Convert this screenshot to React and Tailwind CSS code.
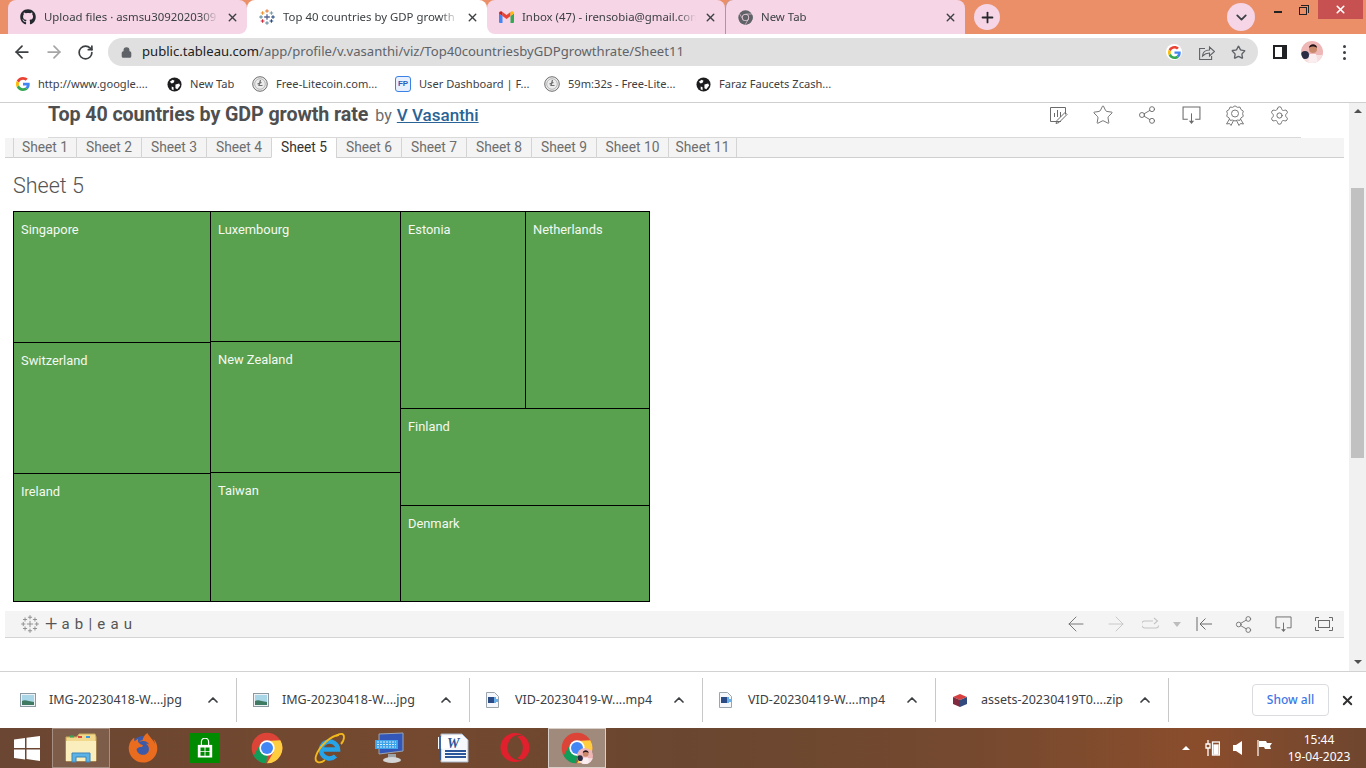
import {
  ArrowLeft,
  ArrowRight,
  RotateCw,
  Lock,
  Star,
  Share2,
  X,
  ChevronDown,
  ChevronUp,
  Plus,
  Settings,
} from "lucide-react";
import { FaGithub, FaFirefoxBrowser, FaOpera } from "react-icons/fa";

const ui = "font-['Noto_Sans',sans-serif]";
const viz = "font-['Roboto',sans-serif]";

const GoogleG = ({ size = 14 }) => (
  <svg width={size} height={size} viewBox="0 0 48 48" className="shrink-0">
    <path fill="#EA4335" d="M24 9.5c3.5 0 6.700 1.200 9.200 3.600l6.900-6.900C35.900 2.400 30.500 0 24 0 14.600 0 6.500 5.400 2.600 13.200l8 6.200C12.500 13.700 17.800 9.500 24 9.500z" />
    <path fill="#4285F4" d="M47 24.500c0-1.600-.1-3.100-.4-4.500H24v9h12.900c-.6 3-2.200 5.500-4.700 7.200l7.700 6C44.400 37.900 47 31.800 47 24.500z" />
    <path fill="#FBBC05" d="M10.600 28.600c-.5-1.400-.8-3-.8-4.600s.3-3.200.8-4.600l-8-6.200C.9 16.500 0 20.100 0 24s.9 7.500 2.600 10.800l8-6.200z" />
    <path fill="#34A853" d="M24 48c6.500 0 11.900-2.100 15.900-5.800l-7.700-6c-2.200 1.400-4.900 2.300-8.200 2.300-6.200 0-11.500-4.200-13.400-9.900l-8 6.200C6.500 42.600 14.600 48 24 48z" />
  </svg>
);

const ChromeIcon = ({ size = 32, gray = false }) => (
  <svg width={size} height={size} viewBox="0 0 48 48" className="shrink-0">
    <circle cx="24" cy="24" r="23" fill={gray ? "#5f6368" : "#DB4437"} />
    <path fill={gray ? "#5f6368" : "#0F9D58"} d="M24 47A23 23 0 0 1 4 35.500L14 18l10 18 -1 11z" />
    <path fill={gray ? "#5f6368" : "#FFCD40"} d="M44 12.500A23 23 0 0 1 24 47l10-17-10-16.500z" />
    {gray && <path d="M24 13h20M15 29L5 12M33 29L23 47" stroke="#f5d5e6" strokeWidth="2" />}
    <circle cx="24" cy="24" r="11.500" fill={gray ? "#f5d5e6" : "#fff"} />
    <circle cx="24" cy="24" r="9" fill={gray ? "#5f6368" : "#4285F4"} />
  </svg>
);

const TableauMark = ({ size = 16, mono = false }) => {
  const plus = (x, y, r, c, w = 1.3) => (
    <path
      key={`${x}-${y}`}
      d={`M${x - r} ${y}H${x + r}M${x} ${y - r}V${y + r}`}
      stroke={mono ? "#8a8a8a" : c}
      strokeWidth={w}
      fill="none"
    />
  );
  return (
    <svg width={size} height={size} viewBox="0 0 20 20" className="shrink-0">
      {plus(10, 10, 3.5, "#5b6591", mono ? 1 : 1.6)}
      {plus(10, 2.500, 2.300, "#e8762c", mono ? 1 : 1.3)}
      {plus(10, 17.500, 2.300, "#5b879b", mono ? 1 : 1.3)}
      {plus(2.500, 10, 2.300, "#59879b", mono ? 1 : 1.3)}
      {plus(17.500, 10, 2.300, "#1f457e", mono ? 1 : 1.3)}
      {plus(4.500, 5, 2.300, "#eb912b", mono ? 1 : 1.3)}
      {plus(15.500, 5, 2.300, "#7099a6", mono ? 1 : 1.3)}
      {plus(4.500, 15, 2.300, "#c72035", mono ? 1 : 1.3)}
      {plus(15.500, 15, 2.300, "#1f447e", mono ? 1 : 1.3)}
    </svg>
  );
};

const GmailIcon = () => (
  <svg width="15" height="12" viewBox="0 0 30 24" className="shrink-0">
    <path fill="#4285F4" d="M0 5v17a2 2 0 0 0 2 2h5V10z" />
    <path fill="#34A853" d="M30 5v17a2 2 0 0 1-2 2h-5V10z" />
    <path fill="#EA4335" d="M7 10V2l8 6 8-6v8l-8 6z" />
    <path fill="#C5221F" d="M0 5c0-4 4.500-6 7-3v8z" />
    <path fill="#FBBC04" d="M30 5c0-4-4.500-6-7-3v8z" />
  </svg>
);

const GlobeIcon = () => (
  <svg width="15" height="15" viewBox="0 0 16 16" className="shrink-0">
    <circle cx="8" cy="8" r="7.500" fill="#1d1d1f" />
    <path fill="#fff" d="M3 5l3-2 2 1-1 2-2 1zM9 8l4-1 1 2-3 4-2-1zM5 10l2 1v3l-2-1z" />
  </svg>
);

const LiteIcon = () => (
  <svg width="16" height="16" viewBox="0 0 16 16" className="shrink-0">
    <circle cx="8" cy="8" r="7.300" fill="#ececec" stroke="#6f6f6f" strokeWidth="1" />
    <circle cx="8" cy="8" r="5.300" fill="none" stroke="#a8a8a8" strokeWidth=".8" />
    <path d="M8.500 4L7 9.500h3.500M5.500 8l4-1.500" fill="none" stroke="#6f6f6f" strokeWidth="1.200" />
  </svg>
);

const FpIcon = () => (
  <span className="w-4 h-4 shrink-0 rounded-[3px] border border-[#3b82e6] bg-[#e8f0fe] text-[#2a5db8] text-[8px] font-bold leading-[14px] text-center font-['Liberation_Sans',sans-serif]">
    FP
  </span>
);

const Avatar = ({ size = 22 }) => (
  <svg width={size} height={size} viewBox="0 0 22 22" className="shrink-0">
    <clipPath id={`av${size}`}>
      <circle cx="11" cy="11" r="11" />
    </clipPath>
    <g clipPath={`url(#av${size})`}>
      <rect width="22" height="22" fill="#efb6b6" />
      <rect y="14" width="22" height="8" fill="#f5dfe0" />
      <circle cx="4" cy="14" r="4" fill="#2a2c44" />
      <circle cx="12" cy="8" r="4" fill="#c98a6c" />
      <path d="M8 7c0-5 8-5 8 0-2-2-6-2-8 0z" fill="#23151a" />
      <path d="M7 22l2-9h6l2 9z" fill="#fbeef0" />
    </g>
  </svg>
);

const tabs = [
  { title: "Upload files · asmsu30920203091", icon: <FaGithub size={16} color="#24292f" className="shrink-0" />, wrap: "w-[239px] bg-[linear-gradient(to_bottom,#ea8f68_50%,#fff_50%)]", shape: "bg-[#f5d5e6] rounded-t-lg rounded-br-lg" },
  { title: "Top 40 countries by GDP growth rate", icon: <TableauMark />, wrap: "w-[240px]", shape: "bg-white rounded-t-lg" },
  { title: "Inbox (47) - irensobia@gmail.com", icon: <GmailIcon />, wrap: "w-[238px] bg-[linear-gradient(to_bottom,#ea8f68_50%,#fff_50%)]", shape: "bg-[#f5d5e6] rounded-t-lg rounded-bl-lg" },
  { title: "New Tab", icon: <ChromeIcon size={15} gray />, wrap: "w-[240px]", shape: "bg-[#f5d5e6] rounded-t-lg border-l border-[#a89aa2]" },
];

const TabStrip = () => (
  <div className={`h-[34px] bg-[#ea8f68] flex pl-2 ${ui}`}>
    {tabs.map((t, i) => (
      <div key={i} className={`h-full ${t.wrap}`}>
        <div className={`h-full flex items-center pl-3 pr-2 gap-2 ${t.shape}`}>
          {t.icon}
          <span className="flex-1 overflow-hidden whitespace-nowrap text-[11.4px] text-[#3c4043] [mask-image:linear-gradient(to_right,black_90%,transparent)]">
            {t.title}
          </span>
          <X size={13} strokeWidth={2.600} className="shrink-0 text-[#3c4043]" />
        </div>
      </div>
    ))}
    <div className="ml-[9px] mt-1 w-[26px] h-[26px] rounded-full bg-[#f5d5e6] flex items-center justify-center">
      <Plus size={17} strokeWidth={2.500} className="text-[#27272a]" />
    </div>
    <div className="flex-1" />
    <div className="mt-[3px] w-7 h-7 rounded-full bg-[#f5d5e6] flex items-center justify-center">
      <ChevronDown size={17} strokeWidth={2.500} className="text-[#3c4043]" />
    </div>
    <div className="h-[19px] flex items-start ml-[19px]">
      <div className="w-[8px] h-[2px] mt-[11px] bg-[#222] mr-[17px]" />
      <div className="relative w-[8px] h-[8px] mt-[7px] border border-[#222] mr-[11px]">
        <div className="absolute -top-[3px] -right-[3px] w-[8px] h-[8px] border-t border-r border-[#222]" />
      </div>
      <div className="w-[45px] h-[19px] mr-[3px] bg-[#c75050] flex items-center justify-center">
        <X size={13} strokeWidth={3} className="text-white" />
      </div>
    </div>
  </div>
);

const ChromeShare = () => (
  <svg width="16" height="15" viewBox="0 0 16 15" fill="none" stroke="#5f6368" strokeWidth="1.100" className="ml-[17px] shrink-0">
    <path d="M6 3.500H.6v11h12V11" />
    <path d="M3.500 11c.3-4 3.500-6 7-6V2l5 4.500-5 4.500V8c-3 0-5 1-7 3z" />
  </svg>
);

const Toolbar = () => (
  <div className="h-[33px] pt-[3px] bg-white flex items-center pl-3">
    <ArrowLeft size={20} strokeWidth={2.100} className="text-[#3c4043]" />
    <ArrowRight size={20} strokeWidth={2.100} className="ml-3 text-[#a6a6a6]" />
    <RotateCw size={17} strokeWidth={2.400} className="ml-[13px] text-[#3c4043]" />
    <div className="ml-[14px] w-[1150px] h-7 rounded-full bg-[#e0e0e0] flex items-center pl-[13px] pr-3">
      <Lock size={11} strokeWidth={3} fill="#5f6368" className="text-[#5f6368]" />
      <span className={`ml-[10px] text-[13.1px] text-[#5f6368] ${ui}`}>
        <span className="text-[#202124]">public.tableau.com</span>/app/profile/v.vasanthi/viz/Top40countriesbyGDPgrowthrate/Sheet11
      </span>
      <div className="flex-1" />
      <div className="w-4 h-4 rounded-full bg-white flex items-center justify-center">
        <GoogleG size={13} />
      </div>
      <ChromeShare />
      <Star size={15} strokeWidth={2.200} className="ml-[16px] text-[#5f6368]" />
    </div>
    <div className="ml-[15px] w-[14px] h-[14px] border-2 border-[#202124] border-r-[5px]" />
    <div className="ml-[14px]">
      <Avatar />
    </div>
    <div className="ml-[20px] flex flex-col gap-[3px]">
      <div className="w-[3px] h-[3px] rounded-full bg-[#3c4043]" />
      <div className="w-[3px] h-[3px] rounded-full bg-[#3c4043]" />
      <div className="w-[3px] h-[3px] rounded-full bg-[#3c4043]" />
    </div>
  </div>
);

const bookmarks = [
  { label: "http://www.google....", icon: <GoogleG />, w: "w-[151px]" },
  { label: "New Tab", icon: <GlobeIcon />, w: "w-[85px]" },
  { label: "Free-Litecoin.com...", icon: <LiteIcon />, w: "w-[143px]" },
  { label: "User Dashboard | F...", icon: <FpIcon />, w: "w-[149px]" },
  { label: "59m:32s - Free-Lite...", icon: <LiteIcon />, w: "w-[152px]" },
  { label: "Faraz Faucets Zcash...", icon: <GlobeIcon />, w: "w-[150px]" },
];

const Bookmarks = () => (
  <div className={`h-[36px] bg-white border-b border-[#cfcfcf] flex items-center pl-4 ${ui}`}>
    {bookmarks.map((b) => (
      <div key={b.label + b.w} className={`flex items-center gap-2 ${b.w}`}>
        {b.icon}
        <span className="text-[11.1px] text-[#3c4043] whitespace-nowrap">{b.label}</span>
      </div>
    ))}
  </div>
);

const EditIcon = () => (
  <svg width="20" height="19" viewBox="0 0 20 19" fill="none" stroke="#6b6b6b" strokeWidth="1">
    <path d="M12 15.500H1.500V1.500h15v7" />
    <path d="M5.500 11V7M8.500 11V4M11.500 11V6" />
    <path d="M7 17.500l1-3 8-8 2 2-8 8z" />
  </svg>
);

const ScreenDownload = ({ size = 18 }) => (
  <svg width={size} height={size} viewBox="0 0 18 18" fill="none" stroke="#6b6b6b" strokeWidth="1">
    <path d="M5.500 12.500H1V1h16v11.500h-4.500" />
    <path d="M9 7v8" />
    <path d="M6.500 14h5L9 17z" fill="#6b6b6b" stroke="none" />
  </svg>
);

const BadgeIcon = () => (
  <svg width="20" height="21" viewBox="0 0 20 21" fill="none" stroke="#7b7b7b" strokeWidth="1">
    <path d="M10 .8l2.300 1.500 2.700-.2 1 2.500 2.300 1.500-.7 2.600.7 2.600-2.300 1.500-1 2.500-2.700-.2L10 16l-2.300-.9-2.700.2-1-2.500L1.700 11.300l.7-2.600-.7-2.600L4 4.600l1-2.500 2.700.2z" />
    <circle cx="10" cy="8.500" r="3.500" />
    <path d="M4.500 14L1.500 19l3-.5 1.500 2 2.500-5M15.500 14l3 5-3-.5-1.500 2-2.500-5" />
  </svg>
);

const headerIcons = [
  <EditIcon key="edit" />,
  <Star key="star" size={22} strokeWidth={1} className="text-[#6b6b6b]" />,
  <Share2 key="share" size={20} strokeWidth={1.100} className="text-[#6b6b6b]" />,
  <ScreenDownload key="dl" size={19} />,
  <BadgeIcon key="badge" />,
  <Settings key="gear" size={21} strokeWidth={1.100} className="text-[#6b6b6b]" />,
];

const VizHeader = () => (
  <div className={`h-[35px] mx-[48px] border-b border-[#d9d9d9] flex items-start ${viz}`}>
    <div className="flex items-baseline">
      <span className="text-[19.700px] leading-[22px] font-bold text-[#4f4f4f] tracking-[-0.1px]">Top 40 countries by GDP growth rate</span>
      <span className="ml-[7px] text-[16px] text-[#6b6b6b]">by</span>
      <span className="ml-[5px] text-[17px] font-medium text-[#2a6496] underline">V Vasanthi</span>
    </div>
    <div className="flex-1" />
    <div className="flex items-center mt-[1px]">
      {headerIcons.map((icon) => (
        <div key={icon.key} className="w-11 flex justify-center">
          {icon}
        </div>
      ))}
    </div>
  </div>
);

const sheets = [
  { name: "Sheet 1", w: "w-[63px]" },
  { name: "Sheet 2", w: "w-[65px]" },
  { name: "Sheet 3", w: "w-[65px]" },
  { name: "Sheet 4", w: "w-[65px]" },
  { name: "Sheet 5", w: "w-[65px]", active: true },
  { name: "Sheet 6", w: "w-[65px]" },
  { name: "Sheet 7", w: "w-[65px]" },
  { name: "Sheet 8", w: "w-[65px]" },
  { name: "Sheet 9", w: "w-[65px]" },
  { name: "Sheet 10", w: "w-[72px]" },
  { name: "Sheet 11", w: "w-[68px]" },
];

const SheetTabs = () => (
  <div className={`h-5 ml-[5px] w-[1339px] bg-[#f4f4f4] border-b border-[#cfcfcf] flex pl-2 ${viz}`}>
    {sheets.map((s) => (
      <div
        key={s.name}
        className={`${s.w} h-5 border-l border-[#d4d4d4] text-center text-[13.800px] leading-[19px] ${
          s.active ? "bg-white text-[#333] border-b border-b-white" : "text-[#6e6e6e]"
        }`}
      >
        {s.name}
      </div>
    ))}
    <div className="border-l border-[#d4d4d4]" />
  </div>
);

const Cell = ({ label, className }) => (
  <div className={`bg-[#59a14f] border-black pl-[7px] pt-[10px] text-[12.870px] leading-[16px] text-[#f4f8f2] ${className}`}>
    {label}
  </div>
);

const Treemap = () => (
  <div className={`ml-[13px] mt-[14px] w-[637px] h-[391px] border-t border-l border-black flex ${viz}`}>
    <div className="w-[197px] flex flex-col">
      <Cell label="Singapore" className="h-[131px] border-r border-b" />
      <Cell label="Switzerland" className="h-[131px] border-r border-b" />
      <Cell label="Ireland" className="h-[128px] border-r border-b" />
    </div>
    <div className="w-[190px] flex flex-col">
      <Cell label="Luxembourg" className="h-[130px] border-r border-b" />
      <Cell label="New Zealand" className="h-[131px] border-r border-b" />
      <Cell label="Taiwan" className="h-[129px] border-r border-b" />
    </div>
    <div className="w-[249px] flex flex-col">
      <div className="h-[197px] flex">
        <Cell label="Estonia" className="w-[125px] border-r border-b" />
        <Cell label="Netherlands" className="w-[124px] border-r border-b" />
      </div>
      <Cell label="Finland" className="h-[97px] border-r border-b" />
      <Cell label="Denmark" className="h-[96px] border-r border-b" />
    </div>
  </div>
);

const ReplayIcon = () => (
  <svg width="20" height="14" viewBox="0 0 20 14" fill="none" stroke="#c4c4c4" strokeWidth="1.100">
    <path d="M11 4H3a2.500 2.500 0 0 0 0 7h11a2.500 2.500 0 0 0 2.500-2.500" />
    <path d="M12 1l3.500 3L12 7" />
  </svg>
);

const FirstIcon = () => (
  <svg width="17" height="14" viewBox="0 0 17 14" fill="none" stroke="#6b6b6b" strokeWidth="1">
    <path d="M1 0v14M16 7H4M9.500 1.500L4 7l5.500 5.500" />
  </svg>
);

const FullscreenIcon = () => (
  <svg width="18" height="14" viewBox="0 0 18 14" fill="none" stroke="#6b6b6b" strokeWidth="1">
    <path d="M.5 4V.5H4M14 .5h3.500V4M17.500 10v3.500H14M4 13.500H.5V10" />
    <rect x="3.500" y="3.500" width="11" height="7" />
  </svg>
);

const VizFooter = () => (
  <div className="mt-[9px] ml-[5px] w-[1339px] h-[27px] bg-[#f4f4f4] border-b border-[#d4d4d4] flex items-center pl-[16px]">
    <TableauMark size={18} mono />
    <span className={`ml-[6px] flex items-center text-[#555] text-[15px] ${viz}`}>
      <span className="text-[22px] leading-none font-light mr-[4px]">+</span>
      <span className="tracking-[5.2px]">ab|eau</span>
    </span>
    <div className="flex-1" />
    <ArrowLeft size={24} strokeWidth={.9} className="text-[#6b6b6b]" />
    <ArrowRight size={24} strokeWidth={.9} className="ml-4 text-[#c4c4c4]" />
    <div className="ml-[14px]">
      <ReplayIcon />
    </div>
    <div className="ml-[11px] w-0 h-0 border-x-[4px] border-x-transparent border-t-[5px] border-t-[#bdbdbd]" />
    <div className="ml-[15px]">
      <FirstIcon />
    </div>
    <Share2 size={19} strokeWidth={1.100} className="ml-[21px] text-[#6b6b6b]" />
    <div className="ml-[22px]">
      <ScreenDownload size={17} />
    </div>
    <div className="ml-[23px] mr-[11px]">
      <FullscreenIcon />
    </div>
  </div>
);

const Scrollbar = () => (
  <div className="w-[17px] h-full bg-[#f1f1f1] flex flex-col items-center">
    <div className="mt-[6px] w-0 h-0 border-x-[4px] border-x-transparent border-b-[4px] border-b-[#505050]" />
    <div className="mt-[75px] w-[13px] h-[270px] bg-[#c1c1c1]" />
    <div className="flex-1" />
    <div className="mb-[7px] w-0 h-0 border-x-[4px] border-x-transparent border-t-[4px] border-t-[#505050]" />
  </div>
);

const FileIcon = ({ kind }) =>
  kind === "img" ? (
    <svg width="16" height="14" viewBox="0 0 16 14" className="shrink-0">
      <rect x=".5" y=".5" width="15" height="13" fill="#eef2f5" stroke="#8b99a3" />
      <rect x="2" y="2" width="12" height="10" fill="#a9d7e8" />
      <path d="M2 12V8c3-2 6 0 12 1v3z" fill="#3f7a62" />
    </svg>
  ) : kind === "vid" ? (
    <svg width="13" height="16" viewBox="0 0 13 16" className="shrink-0">
      <path d="M.5.5h8l4 4v11H.5z" fill="#f5f7fa" stroke="#9aa5ad" />
      <rect x="2" y="5" width="6" height="6" fill="#2b4b86" />
      <path d="M9 5v6M11 7v3" stroke="#2d8fdd" strokeWidth="1.400" />
    </svg>
  ) : (
    <svg width="16" height="15" viewBox="0 0 16 15" className="shrink-0">
      <path d="M1 4l7-3 7 3-7 3z" fill="#d8403f" />
      <path d="M1 4v7l7 3V7z" fill="#7f2a3e" />
      <path d="M15 4v7l-7 3V7z" fill="#334a7c" />
    </svg>
  );

const downloads = [
  { name: "IMG-20230418-W....jpg", kind: "img" },
  { name: "IMG-20230418-W....jpg", kind: "img" },
  { name: "VID-20230419-W....mp4", kind: "vid" },
  { name: "VID-20230419-W....mp4", kind: "vid" },
  { name: "assets-20230419T0....zip", kind: "zip" },
];

const DownloadBar = () => (
  <div className={`h-[57px] bg-white border-t border-[#d2d2d2] flex items-center pl-[4px] ${ui}`}>
    {downloads.map((d, i) => (
      <div key={i} className="w-[233px] h-11 flex items-center pl-4 pr-[15px] border-r border-[#c8c8c8]">
        <div className="w-[29px]">
          <FileIcon kind={d.kind} />
        </div>
        <span className="flex-1 text-[12.500px] text-[#3c4043] whitespace-nowrap">{d.name}</span>
        <ChevronUp size={16} strokeWidth={2.600} className="text-[#3c4043]" />
      </div>
    ))}
    <div className="flex-1" />
    <div className="w-[77px] h-8 rounded border border-[#dadce0] flex items-center justify-center text-[12px] font-medium text-[#3b78e7]">
      Show all
    </div>
    <X size={15} strokeWidth={3} className="ml-[11px] mr-[11px] text-[#303030]" />
  </div>
);

const WinLogo = () => (
  <svg width="26" height="25" viewBox="0 0 26 25" className="shrink-0">
    <path fill="#fff" d="M0 3.500l11-1.500v10H0zM12.500 1.800L26 0v12H12.500zM0 13.500h11v10L0 22zM12.500 13.500H26V25l-13.500-2z" />
  </svg>
);

const ExplorerIcon = () => (
  <svg width="32" height="30" viewBox="0 0 32 30">
    <path d="M1 4h11l2-3h16l1 3v24H1z" fill="#f1d88c" stroke="#c9aa59" />
    <rect x="5" y="2.500" width="4" height="2" fill="#3aa655" />
    <rect x="13" y="3" width="4" height="2" fill="#d8493f" />
    <rect x="21" y="3" width="4" height="2" fill="#3b9ad9" />
    <path d="M1 8h30v20H1z" fill="#fbeebd" />
    <path d="M7 29v-9h18v9h-4v-5H11v5z" fill="#5ab2e6" stroke="#3f84b8" />
  </svg>
);

const FirefoxIcon = () => (
  <div className="relative w-[30px] h-[30px] flex items-center justify-center">
    <div className="w-[24px] h-[24px] rounded-full bg-[#3d5aa8]" />
    <div className="absolute inset-0">
      <FaFirefoxBrowser size={30} color="#ea6c1f" />
    </div>
  </div>
);

const IeIcon = () => (
  <svg width="31" height="32" viewBox="0 0 31 32" fill="none">
    <path d="M8 17.500h16a8.500 8.500 0 1 0-2.500 6.500" stroke="#27a3e8" strokeWidth="4.500" />
    <path d="M25 3C18 3 5 14 2 24c-2 7 4 8 9 4" stroke="#f2b91c" strokeWidth="1.800" />
    <path d="M22 4c4-3 8-3 8 1 0 2-1 5-3 7" stroke="#f2b91c" strokeWidth="1.800" />
  </svg>
);

const StoreIcon = () => (
  <div className="w-[30px] h-[30px] bg-[#008a00] flex items-center justify-center">
    <svg width="18" height="21" viewBox="0 0 20 22">
      <path d="M6 7V3.500a4 4 0 0 1 8 0V7" stroke="#fff" strokeWidth="1.300" fill="none" />
      <path fill="#fff" d="M2 7h16v14H2z" />
      <path fill="#008a00" d="M5 10h4.500v4H5zM10.500 10H15v4h-4.500zM5 15h4.500v4H5zM10.500 15H15v4h-4.500z" />
    </svg>
  </div>
);

const RemoteIcon = () => (
  <svg width="32" height="32" viewBox="0 0 32 32">
    <path d="M4 2l24-1v18L4 22z" fill="#3357b8" stroke="#9ba4b4" />
    <path d="M0 8h23v9H0z" fill="#3da3ea" />
    <path d="M2 10h19M2 12.500h19M2 15h19" stroke="#d8eefc" strokeDasharray="2 1" />
    <path d="M13 22h8v4h-8z" fill="#9ea3a8" />
    <ellipse cx="17" cy="28" rx="9" ry="3" fill="#d2d4d6" />
  </svg>
);

const WordIcon = () => (
  <svg width="31" height="30" viewBox="0 0 31 30">
    <path d="M3 1h21l6 6v22H3z" fill="#f6f8fb" stroke="#a9b6c9" />
    <path d="M0 4l22-2v12L0 16z" fill="#fff" />
    <text x="9" y="15" fontSize="14" fontWeight="700" fontStyle="italic" fill="#2b579a" fontFamily="Liberation Serif, serif">W</text>
    <path d="M2 3v24M7 18h21M7 21h21M7 24h21" stroke="#2b579a" strokeWidth="1.800" />
  </svg>
);

const TaskCell = ({ children }) => <div className="w-[62px] h-full flex items-center justify-center">{children}</div>;

const Taskbar = () => (
  <div className={`h-[40px] bg-[linear-gradient(to_right,#6b4632,#74492f_30%,#6a4630_50%,#74492f_70%,#8a4d2c_88%,#6f462f)] flex items-center ${ui}`}>
    <div className="w-[52px] flex justify-center pl-[2px]">
      <WinLogo />
    </div>
    <div className="w-[58px] h-full bg-[#7e5c4a] border border-[#a58f83] flex items-center justify-center">
      <ExplorerIcon />
    </div>
    <div className="w-[2px]" />
    <TaskCell>
      <FirefoxIcon />
    </TaskCell>
    <TaskCell>
      <StoreIcon />
    </TaskCell>
    <TaskCell>
      <ChromeIcon size={32} />
    </TaskCell>
    <TaskCell>
      <IeIcon />
    </TaskCell>
    <TaskCell>
      <RemoteIcon />
    </TaskCell>
    <TaskCell>
      <WordIcon />
    </TaskCell>
    <TaskCell>
      <FaOpera size={30} color="#e0202d" />
    </TaskCell>
    <div className="w-[58px] h-full ml-[2px] bg-[#a08a7c] border border-[#d8cfc8] flex items-center justify-center relative">
      <ChromeIcon size={32} />
      <div className="absolute right-[12px] bottom-[3px]">
        <Avatar size={16} />
      </div>
    </div>
    <div className="flex-1" />
    <div className="w-0 h-0 border-x-[4px] border-x-transparent border-b-[4px] border-b-white" />
    <svg width="15" height="16" viewBox="0 0 15 16" className="ml-[15px]" fill="none" stroke="#fff" strokeWidth="1.300">
      <path d="M3 0v4M1 4h4v4H1zM3 8v8" />
      <rect x="7.500" y="2" width="7" height="13" />
      <rect x="9" y="5" width="4" height="9" fill="#fff" />
    </svg>
    <svg width="10" height="14" viewBox="0 0 10 14" className="ml-[13px]">
      <path d="M0 4h3l6-4v14l-6-4H0z" fill="#fff" />
    </svg>
    <svg width="16" height="16" viewBox="0 0 16 16" className="ml-[14px]">
      <path d="M1 0v16" stroke="#fff" strokeWidth="1.200" />
      <path d="M2 1h7l1 2h5l-2 3 1 3H8L7 7H2z" fill="#fff" />
    </svg>
    <div className="ml-[14px] mr-[15px] w-[64px] text-center text-[12px] leading-[17px] text-white">
      <div>15:44</div>
      <div>19-04-2023</div>
    </div>
  </div>
);

export default function App() {
  return (
    <div className="w-[1366px] h-[768px] overflow-hidden bg-white flex flex-col">
      <TabStrip />
      <Toolbar />
      <Bookmarks />
      <div className="h-[568px] flex">
        <div className="flex-1">
          <VizHeader />
          <SheetTabs />
          <div className="mt-[17px] ml-[13px] text-[21.500px] leading-[22px] font-light text-[#555] font-['Roboto',sans-serif]">Sheet 5</div>
          <Treemap />
          <VizFooter />
        </div>
        <Scrollbar />
      </div>
      <DownloadBar />
      <Taskbar />
    </div>
  );
}
